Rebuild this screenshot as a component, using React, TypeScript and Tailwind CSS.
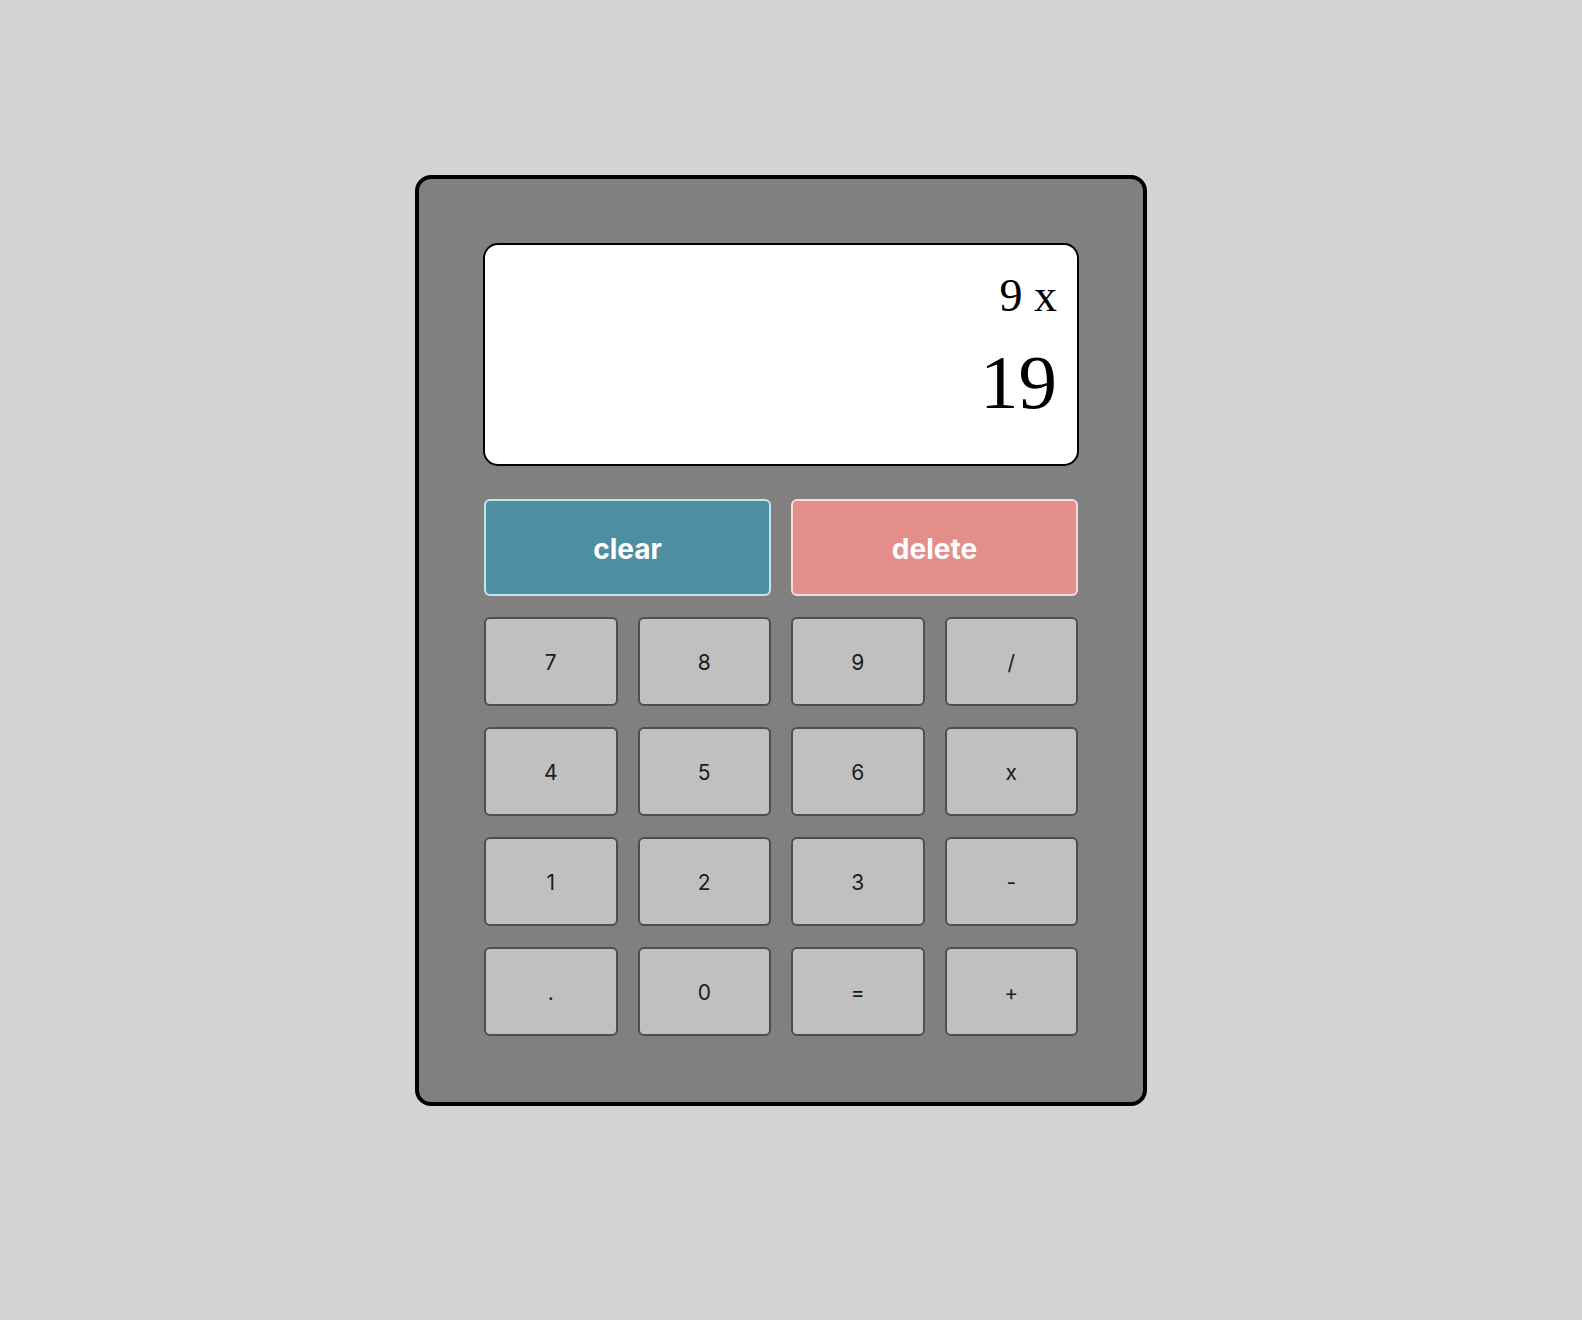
import React from "react";

const keys = ["7", "8", "9", "/", "4", "5", "6", "x", "1", "2", "3", "-", ".", "0", "=", "+"];

export default function App() {
  return (
    <div className="min-h-[1320px] bg-[#d3d3d3] flex justify-center items-start pt-[175px] pr-[20px]">
      <div className="w-[732px] border-[4px] border-black rounded-[16px] bg-[#808080] px-[64px] pt-[64px] pb-[66px]">
        {/* display */}
        <div
          className="h-[223px] bg-white border-2 border-black rounded-[15px] flex flex-col items-end pr-[20px] pt-[28px] text-black"
          style={{ fontFamily: '"Liberation Serif", "Times New Roman", serif' }}
        >
          <div className="text-[46px] leading-none">9 x</div>
          <div className="text-[77px] leading-none mt-[25px]">19</div>
        </div>

        <div
          className="px-[1px]"
          style={{ fontFamily: 'Inter, "Noto Sans", sans-serif' }}
        >
          <div className="grid grid-cols-2 gap-x-[20px] mt-[33px]">
            <button className="h-[97px] rounded-[6px] border-2 border-[#c6e2ec] bg-[#4d8fa1] text-white font-bold text-[28px] pt-[2px]">
              clear
            </button>
            <button className="h-[97px] rounded-[6px] border-2 border-[#f9dada] bg-[#e48e8b] text-white font-bold text-[28px] pt-[2px]">
              delete
            </button>
          </div>

          <div className="grid grid-cols-4 gap-x-[20px] gap-y-[20.5px] mt-[20.5px]">
            {keys.map((k) => (
              <button
                key={k}
                className="h-[89.5px] rounded-[6px] border-2 border-[#4e4e4e] bg-[#c0c0c0] text-[#1c1c1c] text-[21px] pt-[3px]"
              >
                {k}
              </button>
            ))}
          </div>
        </div>
      </div>
    </div>
  );
}
